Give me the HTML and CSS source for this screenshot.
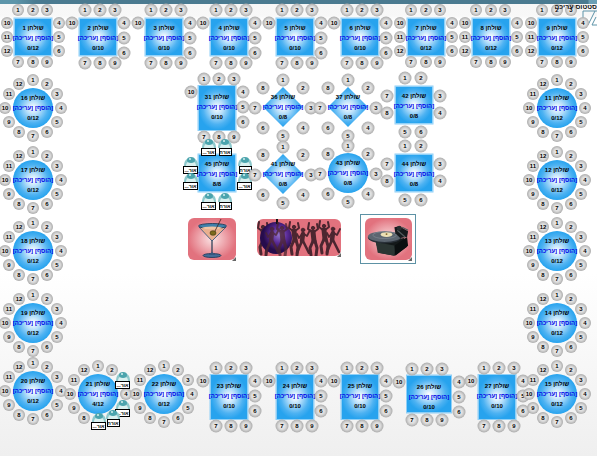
FILE: index.html
```html
<!DOCTYPE html>
<html lang="he" dir="rtl">
<head>
<meta charset="utf-8">
<title>סידור שולחנות</title>
<link rel="stylesheet" href="styles.css">
</head>
<body>
<header class="topbar"></header>
<main class="floor" id="floor" dir="ltr">
  <div class="status" dir="rtl">סטטוס עריכה</div>
  <svg class="status-mark" viewBox="0 0 20 17" aria-hidden="true"><path d="M1 1H20M1 1V15M1 15H6L13 1M10 15H20M10 15L14 7"/></svg>

  <div class="prop prop-bar">
    <svg viewBox="0 0 48 42" aria-hidden="true">
      <path d="M24 22V38" stroke="#20364f" stroke-width="1.2"/>
      <path d="M11 9L24 23L38 9Z" fill="#eab08f" stroke="#2b5078" stroke-width=".8"/>
      <ellipse cx="24.500" cy="8" rx="14" ry="2.500" fill="#3f81ab" stroke="#16324f" stroke-width=".8"/>
      <ellipse cx="24" cy="10" rx="10" ry="1.500" fill="#f0c5a4"/>
      <path d="M25 17L33 1" stroke="#40211c" stroke-width=".8"/>
      <ellipse cx="25" cy="15" rx="3" ry="2.300" fill="#7c6a1c" stroke="#3d3510" stroke-width=".6"/>
      <ellipse cx="24" cy="37.500" rx="9" ry="2" fill="#456d98" stroke="#1d3453" stroke-width=".8"/>
      <path d="M20 37L24 34L28 37Z" fill="#38587f"/>
    </svg>
  </div>

  <div class="prop prop-dance">
    <svg viewBox="0 0 84 37" preserveAspectRatio="none" aria-hidden="true">
      <defs>
        <radialGradient id="ball" cx=".6" cy=".4"><stop offset="0" stop-color="#9575cc"/><stop offset=".5" stop-color="#5b2c98"/><stop offset="1" stop-color="#260c4c"/></radialGradient>
        <g id="dancer" fill="none" stroke="#4c2630" stroke-linecap="round" stroke-linejoin="round">
          <circle cx="6" cy="7" r="1.700" fill="#4c2630"/>
          <path d="M6 11L7 20" stroke-width="5"/>
          <path d="M5 11L1 8L2 2M7 11L11 8L10 3" stroke-width="2"/>
          <path d="M6 20L3 27L4 34M8 20L10 27L9 35" stroke-width="3"/>
        </g>
        <g id="dancer-low" fill="none" stroke="#4c2630" stroke-linecap="round" stroke-linejoin="round">
          <circle cx="6" cy="10" r="1.800" fill="#4c2630"/>
          <path d="M6 14L5 21" stroke-width="4.500"/>
          <path d="M5 14L2 18L0 14M7 14L10 16L13 10" stroke-width="1.800"/>
          <path d="M5 21L2 28L0 33M6 21L9 27L12 33" stroke-width="2.600"/>
        </g>
      </defs>
      <use href="#dancer" x="0" y="1"/>
      <circle cx="19" cy="19" r="16" fill="url(#ball)"/>
      <path d="M20 0V5" stroke="#111" stroke-width="2"/>
      <g opacity=".75"><use href="#dancer-low" x="9"/><use href="#dancer" x="19" y="2"/></g>
      <use href="#dancer" x="31" y="1"/>
      <use href="#dancer-low" x="40" y="1"/>
      <use href="#dancer" x="50" y="2"/>
      <use href="#dancer" x="61"/>
      <use href="#dancer-low" x="70"/>
    </svg>
  </div>

  <div class="prop prop-dj">
    <svg viewBox="0 0 48 42" aria-hidden="true">
      <path d="M11 24L40 20L43 29L30 38L14 35Z" fill="#14191a"/>
      <path d="M11 24L13 35L30 38L31 28Z" fill="#2b3533"/>
      <path d="M30 28L43 19L44 28L31 38Z" fill="#0b0f10"/>
      <ellipse cx="20" cy="19.500" rx="17" ry="6" fill="#293038"/>
      <ellipse cx="20" cy="18.500" rx="17" ry="5.500" fill="#5c6570"/>
      <ellipse cx="20" cy="17" rx="12" ry="3.500" fill="none" stroke="#87909a" stroke-width=".6"/>
      <ellipse cx="22" cy="16.500" rx="6" ry="2.500" fill="#ece0b5"/>
      <circle cx="22" cy="16" r="1" fill="#826528"/>
      <path d="M30 9L35 8L44 13L43 19L36 20L31 15Z" fill="#171a1d"/>
      <path d="M33 12L41 19M38 9L44 12" stroke="#525a5d" stroke-width="1.200"/>
      <circle cx="35" cy="10" r="2.500" fill="#282e30"/>
    </svg>
  </div>
</main>
<script src="plan.js"></script>
</body>
</html>
```
FILE: styles.css
```css
* { box-sizing: border-box; }

body {
  margin: 0;
  min-height: 100vh;
  overflow: hidden;
  font-family: "Liberation Sans", Arial, sans-serif;
  background: linear-gradient(#f6f6f6 0, #f8f8f8 16px, #fff 20px, #fff 60%, #efefef 100%);
}

.topbar {
  height: 4px;
  background: linear-gradient(90deg, #5c95aa 0, #5c95aa 16px, #4a7a90 36px, #4a7a90 calc(100% - 9px), #6ba0b6 calc(100% - 8px));
}

/* The plan is a free canvas; item coordinates are measured from the window top. */
.floor {
  position: absolute;
  inset: 0;
  overflow: hidden;
}

.status {
  position: absolute;
  z-index: 1;
  top: 2px;
  right: 0;
  font-size: 7px;
  line-height: 9px;
  font-weight: bold;
  color: #111;
  white-space: nowrap;
}

.status-mark {
  position: absolute;
  top: 10px;
  right: -5px;
  width: 20px;
  height: 17px;
  fill: none;
  stroke: #5c93a8;
  stroke-width: 1;
}

.table {
  position: absolute;
  display: flex;
  flex-direction: column;
  align-items: center;
  padding-top: 5px;
  transform: translate(-50%, -50%);
  white-space: nowrap;
  font-size: 6px;
  line-height: 10px;
  font-weight: bold;
  color: #000;
}

.table-tall { padding-top: 7px; }

.surface {
  position: absolute;
  inset: 0;
  z-index: -1;
  background: radial-gradient(closest-side, #fff 0, #b5defa 35%, #4db2f2 75%, #27a3ee 100%);
}

.table-square .surface { border: 1px solid #8fd0f8; }
.table-round .surface { border-radius: 50%; }
.table-diamond .surface { clip-path: polygon(50% 0, 100% 50%, 50% 100%, 0 50%); }

.actions {
  display: flex;
  gap: 2px;
}

.actions a {
  color: #0000e6;
  text-decoration: none;
}

.chair {
  position: absolute;
  width: 13px;
  height: 13px;
  padding: 0;
  border: 0;
  border-radius: 50%;
  transform: translate(-50%, -50%);
  background: radial-gradient(circle, #f4f4f4 0, #dadada 40%, #acacac 70%);
  color: #000;
  font: bold 6px/13px "Liberation Sans", Arial, sans-serif;
  text-align: center;
}

.chair-small {
  width: 12px;
  height: 12px;
  line-height: 12px;
}

.guest {
  position: absolute;
  display: flex;
  flex-direction: column;
  align-items: center;
  padding: 0;
  border: 0;
  background: none;
}

.guest svg {
  width: 14px;
  height: 9px;
}

.guest-name {
  width: 15px;
  height: 8px;
  border: 1px solid #000;
  background: #fff;
  color: #000;
  font: bold 5px/6px "Liberation Sans", Arial, sans-serif;
  text-align: center;
  white-space: nowrap;
}

.guest-short { width: 13px; }

.prop {
  position: absolute;
  border-radius: 6px;
  background: radial-gradient(closest-side, #fbe3e4, #e2727e);
}

.prop svg {
  display: block;
  width: 100%;
  height: 100%;
}

.prop::after {
  content: "";
  position: absolute;
  right: 0;
  bottom: -1px;
  border-left: 4px solid transparent;
  border-bottom: 4px solid #666;
}

.prop-bar { left: 188px; top: 218px; width: 48px; height: 42px; }
.prop-dance { left: 257px; top: 219px; width: 84px; height: 37px; background: #e2727e; }
.prop-dj { left: 365px; top: 218px; width: 47px; height: 42px; }

.prop-dj::before {
  content: "";
  position: absolute;
  inset: -4px -4px -4px -5px;
  border: 1px solid #5d92a5;
}
```
FILE: plan.js
```js
// [number, centre x, centre y, shape, seats, width, height, occupied seats]
const tables = [
  [1, 33, 37, "square", 12], [2, 98, 37, "square", 10], [3, 164, 37, "square", 10],
  [4, 229, 37, "square", 10], [5, 295, 37, "square", 10], [6, 360, 37, "square", 10],
  [7, 426, 37, "square", 12], [8, 491, 37, "square", 12], [9, 557, 37, "square", 12],
  [16, 33, 108, "round", 12], [17, 33, 180, "round", 12], [18, 33, 251, "round", 12],
  [19, 33, 323, "round", 12], [20, 33, 391, "round", 12],
  [31, 217, 108, "square", 10, 39, 46], [36, 283, 107, "diamond", 8],
  [37, 348, 107, "diamond", 8], [42, 414, 105, "square", 8],
  [45, 217, 173, "square", 8, 39, 39, 8], [41, 283, 174, "diamond", 8],
  [43, 348, 173, "round", 8], [44, 414, 173, "square", 8],
  [21, 98, 394, "round", 12, 40, 40, 4], [22, 164, 394, "round", 12],
  [23, 229, 397, "square", 10, 39, 46], [24, 295, 397, "square", 10, 39, 46],
  [25, 360, 397, "square", 10, 39, 46], [26, 429, 394, "square", 10, 46, 39],
  [27, 497, 397, "square", 10, 39, 46],
  [11, 557, 108, "round", 12], [12, 557, 180, "round", 12], [13, 557, 251, "round", 12],
  [14, 557, 323, "round", 12], [15, 557, 394, "round", 12]
];

// Seated guests per table: [seat, label left, label top, name fits]
const guests = {
  45: [[1, 201, 147, false], [2, 218, 147, true], [3, 238, 165, true], [4, 237, 181, false],
       [5, 201, 201, false], [6, 218, 201, true], [7, 183, 165, false], [8, 183, 181, false]],
  21: [[3, 115, 380, false], [5, 115, 408, false], [6, 106, 418, true], [7, 91, 421, false]]
};

const floor = document.getElementById("floor");

function add(parent, tag, cls, text) {
  const el = document.createElement(tag);
  el.className = cls;
  if (text !== undefined) el.textContent = text;
  parent.appendChild(el);
  return el;
}

function place(el, x, y) {
  el.style.left = x + "px";
  el.style.top = y + "px";
}

function seatOffsets(shape, seats, w, h) {
  const r = Math.round;
  if (shape !== "square") {
    return Array.from({ length: seats }, (_, i) => {
      const a = 2 * Math.PI * i / seats;
      return [r(28 * Math.sin(a)), r(-28 * Math.cos(a)) + (seats === 8 ? 1 : 0)];
    });
  }
  const L = -Math.floor(w / 2), T = -Math.floor(h / 2), R = -L, B = -T;
  if (seats === 8) {
    return [[-9, T - 8], [7, T - 8], [R + 7, -9], [R + 7, 8],
            [-9, B + 8], [7, B + 8], [L - 8, -9], [L - 8, 8]];
  }
  if (seats === 10) {
    const large = w !== h;
    const top = large ? T - 6 : T - 8;
    const side = large ? T + 7 : T + 5;
    const bottom = h > w ? B + 6 : B + 7;
    return [[L + 6, top], [L + 21, top], [L + 36, top],
            [R + 7, side], [R + 7, side + 15], [R + 7, side + 30],
            [L + 6, bottom], [L + 21, bottom], [L + 36, bottom], [L - 7, side]];
  }
  return [[-15, -27], [0, -27], [14, -27], [26, -14], [26, 0], [26, 14],
          [-15, 25], [0, 25], [14, 25], [-26, -14], [-26, 0], [-26, 14]];
}

for (const [num, x, y, shape, seats, w = shape === "square" ? 39 : 40, h = w, used = 0] of tables) {
  const table = add(floor, "section", "table table-" + shape + (w !== h ? " table-tall" : ""));
  place(table, x, y);
  table.style.width = w + "px";
  table.style.height = h + "px";
  add(table, "div", "surface");
  add(table, "div", "", "שולחן " + num).dir = "rtl";
  const actions = add(table, "div", "actions");
  actions.dir = "rtl";
  for (const label of ["[הוסף]", "[עריכה]"]) add(actions, "a", "", label).href = "#";
  add(table, "div", "", used + "/" + seats);

  const seated = guests[num] || [];
  seatOffsets(shape, seats, w, h).forEach(([dx, dy], i) => {
    if (seated.some(g => g[0] === i + 1)) return;
    const chair = add(floor, "button", seats === 12 ? "chair chair-small" : "chair", i + 1);
    place(chair, x + dx, y + dy);
  });
  for (const [, gx, gy, fits] of seated) {
    const guest = add(floor, "button", "guest");
    place(guest, gx, gy - 8);
    guest.innerHTML = '<svg viewBox="0 0 14 9" aria-hidden="true">' +
      '<path d="M0 9C0 3 3 1 7 1S14 3 14 9Z" fill="#8ec9cc"/>' +
      '<path d="M2 9C2 6 4 4 7 4S12 6 12 9Z" fill="#d9f0ef"/>' +
      '<ellipse cx="7" cy="3" rx="4" ry="3" fill="#4ba4ad"/><circle cx="6" cy="2" r="1" fill="#d5f0f0"/></svg>';
    const name = add(guest, "span", fits ? "guest-name guest-short" : "guest-name", fits ? "אורח" : "אור...");
    name.dir = "rtl";
  }
}
```
